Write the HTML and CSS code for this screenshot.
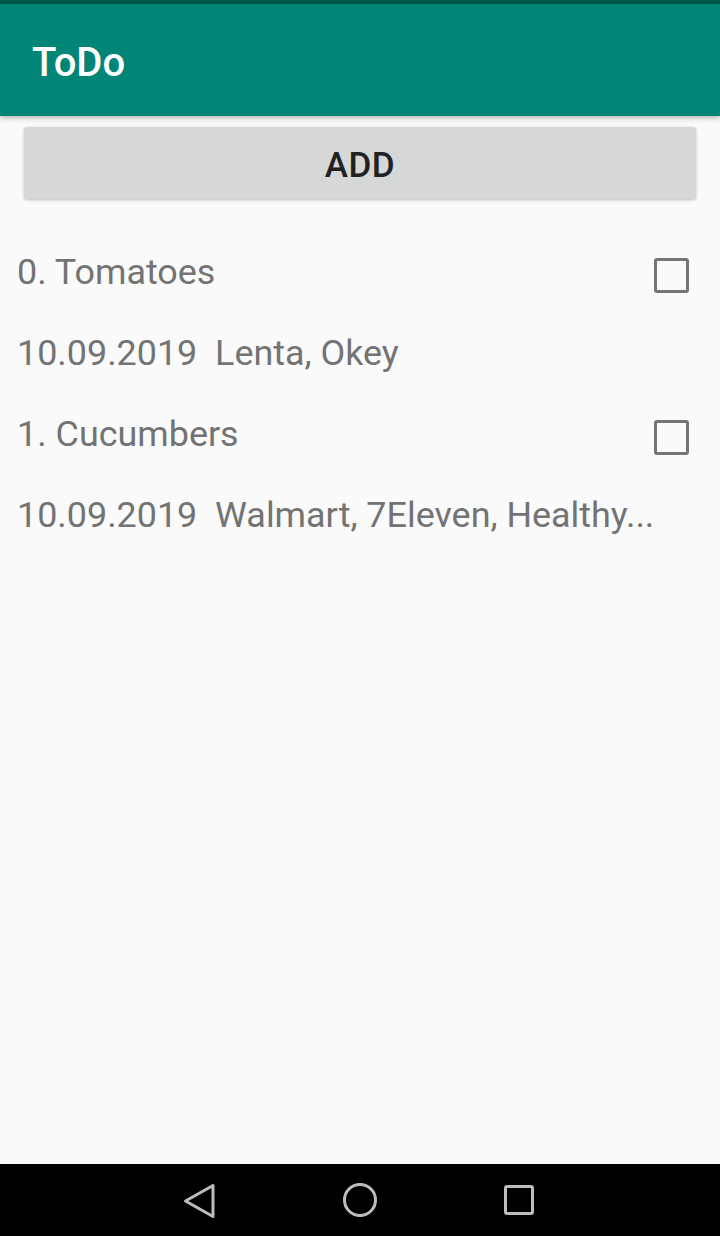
FILE: index.html
```html
<!DOCTYPE html>
<html>
<head>
<meta charset="utf-8">
<link rel="stylesheet" href="styles.css">
</head>
<body>
<div class="screen">
  <div class="status"></div>
  <header class="appbar"><span class="title">ToDo</span></header>
  <main class="content">
    <div class="btn-wrap"><button class="add-btn">ADD</button></div>
    <ul class="list">
      <li class="item">
        <div class="row head"><span class="name">0. Tomatoes</span><span class="check"></span></div>
        <div class="row sub">10.09.2019&nbsp; Lenta, Okey</div>
      </li>
      <li class="item">
        <div class="row head"><span class="name">1. Cucumbers</span><span class="check"></span></div>
        <div class="row sub">10.09.2019&nbsp; Walmart, 7Eleven, Healthy...</div>
      </li>
    </ul>
  </main>
  <nav class="navbar">
    <svg width="34" height="36" viewBox="0 0 34 36"><path d="M31 2.5 L3.5 18 L31 33.5 Z" fill="none" stroke="#bdbdbd" stroke-width="3" stroke-linejoin="round"/></svg>
    <svg width="36" height="36" viewBox="0 0 36 36"><circle cx="18" cy="18" r="15.5" fill="none" stroke="#bdbdbd" stroke-width="3"/></svg>
    <svg width="32" height="32" viewBox="0 0 32 32"><rect x="2.5" y="2.5" width="27" height="27" rx="1.5" fill="none" stroke="#bdbdbd" stroke-width="3"/></svg>
  </nav>
</div>
</body>
</html>
```
FILE: styles.css
```css
* { box-sizing: border-box; }
html, body { margin: 0; padding: 0; }
body { font-family: Roboto, "Liberation Sans", sans-serif; background: #fafafa; }
.screen { width: 720px; height: 1236px; display: flex; flex-direction: column; background: #fafafa; }
.status { height: 4px; background: #00574b; flex: none; }
.appbar {
  height: 112px; flex: none; background: #008577; display: flex; align-items: center;
  padding: 5px 0 0 32px; box-shadow: 0 2px 5px rgba(0,0,0,0.28); position: relative; z-index: 1;
}
.title { color: #fff; font-size: 40px; font-weight: 500; line-height: 1; }
.content { flex: 1; }
.btn-wrap { padding: 11px 24px 0 24px; }
.add-btn {
  display: block; width: 100%; height: 72px; border: none; border-radius: 3px; background: #d6d7d7;
  font-family: Roboto, "Liberation Sans", sans-serif; font-size: 35px; font-weight: 500; color: #212121;
  letter-spacing: 0.5px; box-shadow: 0 1px 3px rgba(0,0,0,0.25); padding: 0; padding-top: 4px;
}
.list { list-style: none; margin: 0; padding: 30px 0 0 0; }
.row {
  height: 81px; padding-top: 5px; line-height: 76px; font-size: 35.9px; color: #737373;
  padding-left: 17px; white-space: nowrap;
}
.head { display: flex; justify-content: space-between; align-items: center; padding-right: 31px; }
.check { width: 35px; height: 35px; border: 3.5px solid #757575; border-radius: 3px; margin-top: 6px; }
.navbar {
  height: 72px; flex: none; background: #000; display: flex; align-items: center;
  justify-content: flex-start; padding-left: 182px;
}
.navbar svg:nth-child(1) { margin-right: 126px; margin-top: 1px; }
.navbar svg:nth-child(2) { margin-right: 124.5px; }
```
